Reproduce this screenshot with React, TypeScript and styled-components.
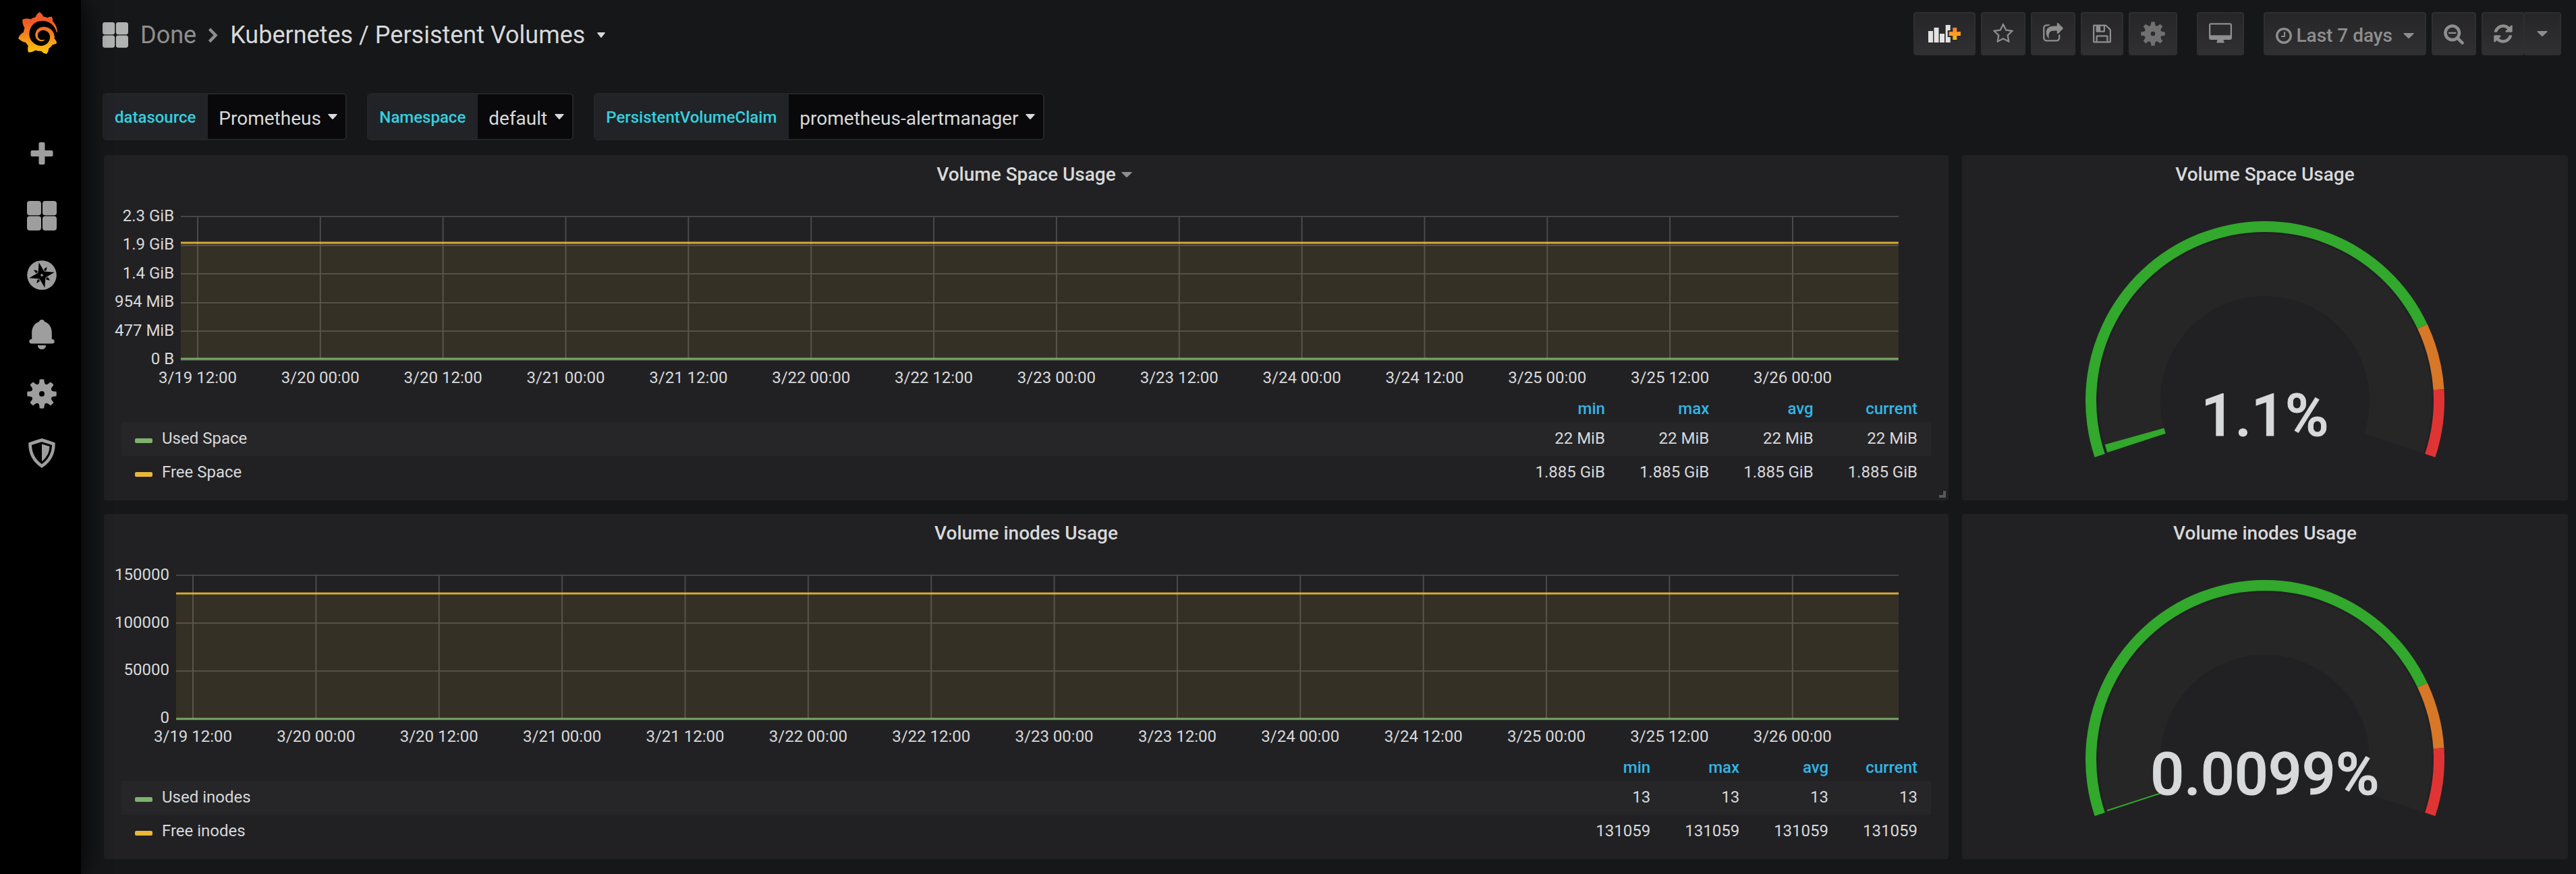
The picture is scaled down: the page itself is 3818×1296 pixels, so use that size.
import React from "react";
import styled, { createGlobalStyle, css } from "styled-components";
import { SiGrafana } from "react-icons/si";

const GlobalStyle = createGlobalStyle`
  *, *::before, *::after { box-sizing: border-box; }
  body {
    margin: 0;
    background: #161719;
    color: #d8d9da;
    font-family: Roboto, "Liberation Sans", sans-serif;
    font-size: 28px;
  }
  button, select { font-family: inherit; }
  a { color: inherit; text-decoration: none; }
`;

/* ---------- layout ---------- */

const Page = styled.div`
  display: flex;
  min-height: 100vh;
`;

const SideMenu = styled.nav`
  z-index: 1;
  flex: none;
  display: flex;
  flex-direction: column;
  width: 120px;
  padding-top: 18px;
  background: #000;
  box-shadow: 0 0 40px #000;
`;

const LogoLink = styled.a`
  display: flex;
  width: 58px;
  height: 62px;
  margin: 0 0 108px 27px;

  svg {
    width: 58px;
    height: 62px;
    fill: url(#logoFill);
  }
`;

const GradientStore = styled.svg`
  position: absolute;
  width: 0;
  height: 0;
`;

const SideLink = styled.a`
  display: flex;
  align-items: center;
  justify-content: center;
  height: 88px;
  padding-right: 36px;
  padding-left: 40px;
  color: #9e9e9e;
`;

const Main = styled.main`
  flex: 1;
  min-width: 0;
`;

const TopBar = styled.header`
  display: flex;
  align-items: center;
  justify-content: space-between;
  height: 100px;
  padding: 0 22px 0 32px;
`;

const Breadcrumb = styled.div`
  display: flex;
  align-items: center;
  gap: 16px;
  padding-top: 3px;
  font-size: 36px;
  line-height: 40px;
`;

const Folder = styled.a`
  padding-left: 2px;
  color: #8e8e8e;
`;

const DashboardTitle = styled.button`
  display: flex;
  align-items: center;
  gap: 18px;
  padding: 0;
  border: 0;
  background: none;
  color: #d8d9da;
  font-size: 36px;
  line-height: 40px;
`;

const Toolbar = styled.div`
  display: flex;
  gap: 29px;
`;

const ButtonGroup = styled.div<{ $joined?: boolean }>`
  display: flex;
  gap: ${(p) => (p.$joined ? 0 : 8)}px;

  ${(p) =>
    p.$joined &&
    css`
      button + button {
        border-left-width: 0;
        border-radius: 0 4px 4px 0;
      }
    `}
`;

const ToolButton = styled.button<{ $pad?: number }>`
  display: flex;
  align-items: center;
  justify-content: center;
  gap: 6px;
  height: 64px;
  padding: 0 ${(p) => p.$pad ?? 16}px;
  border: 2px solid #2f2f32;
  border-radius: 4px;
  background: linear-gradient(180deg, #262628, #303032);
  color: #8e8e8e;
  font-size: 28px;
  font-weight: 500;
`;

const TimeButton = styled(ToolButton)`
  padding-top: 5px;
`;

const TimeText = styled.span`
  padding-right: 10px;
  line-height: 32px;
`;

const Variables = styled.div`
  display: flex;
  flex-wrap: wrap;
  gap: 30px;
  padding: 38px 32px 22px;
`;

const Variable = styled.div`
  display: flex;
  height: 70px;
  border: 2px solid #262628;
  border-radius: 6px;
  overflow: hidden;
`;

const VariableLabel = styled.label`
  display: flex;
  align-items: center;
  padding: 2px 18px 0 16px;
  background: #212327;
  color: #33d1e0;
  font-size: 24px;
  font-weight: 500;
`;

const VariableValue = styled.div`
  display: flex;
  align-items: center;
  gap: 10px;
  padding: 0 12px 0 16px;
  background: #09090b;
`;

const VariableSelect = styled.select`
  appearance: none;
  height: 66px;
  padding: 5px 0 0;
  border: 0;
  background: transparent;
  color: #d8d9da;
  font-size: 28px;
`;

const DashboardGrid = styled.div`
  display: grid;
  grid-template-columns: repeat(24, minmax(0, 1fr));
  gap: 20px;
  padding: 0 12px 22px 34px;
`;

/* ---------- panels ---------- */

const PanelBox = styled.section<{ $span: number }>`
  position: relative;
  display: flex;
  flex-direction: column;
  grid-column: span ${(p) => p.$span};
  padding-bottom: 16px;
  border-radius: 4px;
  background: #212124;
`;

const PanelHeader = styled.header`
  display: grid;
  grid-template-columns: 1fr auto 1fr;
  align-items: center;
  column-gap: 8px;
  height: 56px;
  padding-top: 2px;
  color: #8e8e8e;
`;

const PanelTitle = styled.h2`
  grid-column: 2;
  margin: 0;
  color: #d8d9da;
  font-size: 28px;
  font-weight: 500;
  line-height: 40px;
`;

const ResizeCorner = styled.span`
  position: absolute;
  right: 4px;
  bottom: 4px;
  width: 10px;
  height: 10px;
  border-right: 4px solid #5a5a5c;
  border-bottom: 4px solid #5a5a5c;
`;

const Chart = styled.div`
  display: flex;
  gap: 10px;
  padding: 34px 74px 0 16px;
`;

const YAxis = styled.div`
  display: flex;
  flex-direction: column;
  justify-content: space-between;
  height: 236px;
  margin-top: -12px;
  font-size: 24px;
  line-height: 24px;
  text-align: right;
  white-space: nowrap;
`;

const Plot = styled.svg`
  flex: 1;
  min-width: 0;
  height: 252px;
  overflow: visible;
`;

const TickText = styled.text`
  fill: #d8d9da;
  font-size: 24px;
  text-anchor: middle;
`;

const Legend = styled.table`
  width: calc(100% - 52px);
  margin: 14px 26px 0;
  border-collapse: collapse;
  font-size: 24px;
`;

const LegendHead = styled.th`
  padding: 0 20px 0 31px;
  color: #33b5e5;
  font-weight: 500;
  line-height: 40px;
  text-align: right;
`;

const LegendRow = styled.tr`
  line-height: 48px;

  &:nth-child(odd) {
    background: #262628;
  }
`;

const LegendCell = styled.td`
  padding: 0 20px 2px 31px;
  text-align: right;
  white-space: nowrap;
`;

const LegendName = styled.th`
  width: 100%;
  padding: 0 20px 2px;
  font-weight: 400;
  text-align: left;
`;

const LegendLabel = styled.span`
  display: flex;
  align-items: center;
  gap: 14px;
`;

const Swatch = styled.span<{ $color: string }>`
  width: 26px;
  height: 7px;
  margin-top: 7px;
  border-radius: 2px;
  background: ${(p) => p.$color};
`;

const GaugeDrawing = styled.svg`
  align-self: center;
  width: 600px;
  max-width: 100%;
  height: 400px;
`;

const GaugeValue = styled.text`
  fill: #d8d9da;
  stroke: #d8d9da;
  stroke-width: 1px;
  font-size: 88px;
  font-weight: 500;
  text-anchor: middle;
`;

/* ---------- icons ---------- */

const FA = {
  star: "M1201 1004l306-297-422-62-189-382-189 382-422 62 306 297-73 421 378-199 377 199zm527-357q0 22-26 48l-363 354 86 500q1 7 1 20 0 50-41 50-19 0-40-12l-449-236-449 236q-22 12-40 12-21 0-31.5-14.5t-10.5-35.5q0-6 2-20l86-500-364-354q-25-27-25-48 0-37 56-46l502-73 225-455q19-41 49-41t49 41l225 455 502 73q56 9 56 46z",
  share:
    "M1472 989v259q0 119-84.5 203.5t-203.5 84.5h-832q-119 0-203.5-84.5t-84.5-203.5v-832q0-119 84.5-203.5t203.5-84.5h255q13 0 22.5 9.5t9.5 22.5q0 27-26 32-77 26-133 60-10 4-16 4h-112q-66 0-113 47t-47 113v832q0 66 47 113t113 47h832q66 0 113-47t47-113v-214q0-19 18-29 28-13 54-37 16-16 35-8 21 9 21 29zm237-496l-384 384q-18 19-45 19-12 0-25-5-39-17-39-59v-192h-160q-323 0-438 131-119 137-74 473 3 23-20 34-8 2-12 2-16 0-26-13-10-14-21-31t-39.5-68.5-49.5-99.5-38.5-114-17.5-122q0-49 3.5-91t14-90 28-88 47-81.5 68.5-74 94.5-61.5 124.5-48.5 159.5-30.5 196.5-11h160v-192q0-42 39-59 13-5 25-5 26 0 45 19l384 384q19 19 19 45t-19 45z",
  save: "M512 1536h768v-384h-768v384zm896 0h128v-896q0-14-10-38.5t-20-34.5l-281-281q-10-10-34-20t-39-10v416q0 40-28 68t-68 28h-576q-40 0-68-28t-28-68v-416h-128v1280h128v-416q0-40 28-68t68-28h832q40 0 68 28t28 68v416zm-384-928v-320q0-13-9.5-22.5t-22.5-9.5h-192q-13 0-22.5 9.5t-9.5 22.5v320q0 13 9.5 22.5t22.5 9.5h192q13 0 22.5-9.5t9.5-22.5zm640 32v928q0 40-28 68t-68 28h-1344q-40 0-68-28t-28-68v-1344q0-40 28-68t68-28h928q40 0 88 20t76 48l280 280q28 28 48 76t20 88z",
  desktop:
    "M1728 992v-832q0-13-9.5-22.5t-22.5-9.5h-1600q-13 0-22.5 9.5t-9.5 22.5v832q0 13 9.5 22.5t22.5 9.5h1600q13 0 22.5-9.5t9.5-22.5zm128-832v1088q0 66-47 113t-113 47h-544q0 37 16 77.5t32 71 16 43.5q0 26-19 45t-45 19h-512q-26 0-45-19t-19-45q0-14 16-44t32-70 16-78h-544q-66 0-113-47t-47-113v-1088q0-66 47-113t113-47h1600q66 0 113 47t47 113z",
  clock:
    "M1024 544v448q0 14-9 23t-23 9h-320q-14 0-23-9t-9-23v-64q0-14 9-23t23-9h224v-352q0-14 9-23t23-9h64q14 0 23 9t9 23zm416 352q0-148-73-273t-198-198-273-73-273 73-198 198-73 273 73 273 198 198 273 73 273-73 198-198 73-273zm224 0q0 209-103 385.5t-279.5 279.5-385.5 103-385.5-103-279.5-279.5-103-385.5 103-385.5 279.5-279.5 385.5-103 385.5 103 279.5 279.5 103 385.5z",
  zoomOut:
    "M1088 800v64q0 13-9.5 22.5t-22.5 9.5h-576q-13 0-22.5-9.5t-9.5-22.5v-64q0-13 9.5-22.5t22.5-9.5h576q13 0 22.5 9.5t9.5 22.5zm128 32q0-185-131.5-316.5t-316.5-131.5-316.5 131.5-131.5 316.5 131.5 316.5 316.5 131.5 316.5-131.5 131.5-316.5zm512 832q0 53-37.5 90.5t-90.5 37.5q-54 0-90-38l-343-342q-179 124-399 124-143 0-273.5-55.5t-225-150-150-225-55.5-273.5 55.5-273.5 150-225 225-150 273.5-55.5 273.5 55.5 225 150 150 225 55.5 273.5q0 220-124 399l343 343q37 37 37 90z",
  refresh:
    "M1639 1056q0 5-1 7-64 268-268 434.5t-478 166.5q-146 0-282.5-55t-243.5-157l-129 129q-19 19-45 19t-45-19-19-45v-448q0-26 19-45t45-19h448q26 0 45 19t19 45-19 45l-137 137q71 66 161 102t187 36q134 0 250-65t186-179q11-17 53-117 8-23 30-23h192q13 0 22.5 9.5t9.5 22.5zm25-800v448q0 26-19 45t-45 19h-448q-26 0-45-19t-19-45 19-45l138-138q-148-137-349-137-134 0-250 65t-186 179q-11 17-53 117-8 23-30 23h-199q-13 0-22.5-9.5t-9.5-22.5v-7q65-268 270-434.5t480-166.5q146 0 284 55.5t245 156.5l130-129q19-19 45-19t45 19 19 45z",
};

function FaIcon({ d, x, w, size = 32 }: { d: string; x: number; w: number; size?: number }) {
  return (
    <svg
      width={Math.round((w * size) / 1792)}
      height={size}
      viewBox={`${x} 0 ${w} 1792`}
      fill="currentColor"
      aria-hidden="true"
    >
      <path d={d} />
    </svg>
  );
}

function Caret({ width = 14 }: { width?: number }) {
  return (
    <svg width={width} height={8} viewBox="0 0 16 9" preserveAspectRatio="none" fill="currentColor" aria-hidden="true">
      <path d="M1 0h14q1 0 .6 1L9 8.5q-1 1-2 0L.4 1Q0 0 1 0z" />
    </svg>
  );
}

function AppsIcon({ size, color }: { size: number; color?: string }) {
  return (
    <svg width={size} height={size} viewBox="0 0 44 44" fill={color ?? "currentColor"} aria-hidden="true">
      <rect x="0" y="0" width="21" height="21.2" rx="4" />
      <rect x="23" y="0" width="21" height="21.2" rx="4" />
      <rect x="0" y="22.5" width="21" height="21.2" rx="4" />
      <rect x="23" y="22.5" width="21" height="21.2" rx="4" />
    </svg>
  );
}

/* Eight flared teeth round a disc, with a hole punched in the middle. */
const gearPath = (() => {
  const at = (deg: number, r: number) => {
    const a = (deg * Math.PI) / 180;
    return `${(22 + r * Math.sin(a)).toFixed(2)} ${(22 - r * Math.cos(a)).toFixed(2)}`;
  };
  const parts: string[] = [];
  for (let i = 0; i < 8; i++) {
    const c = i * 45;
    parts.push(
      `${i === 0 ? "M" : "L"}${at(c - 19, 15.4)}`,
      `Q${at(c - 12, 16.4)} ${at(c - 9, 21.6)}`,
      `Q${at(c, 22.3)} ${at(c + 9, 21.6)}`,
      `Q${at(c + 12, 16.4)} ${at(c + 19, 15.4)}`,
    );
  }
  return `${parts.join("")}ZM22 18a4 4 0 1 0 0 8 4 4 0 1 0 0-8z`;
})();

function GearIcon({ size }: { size: number }) {
  return (
    <svg width={size} height={size} viewBox="0 0 44 44" fill="currentColor" fillRule="evenodd" aria-hidden="true">
      <path d={gearPath} />
    </svg>
  );
}

function PlusIcon() {
  return (
    <svg width={44} height={44} viewBox="0 0 44 44" fill="currentColor" aria-hidden="true">
      <rect x="5.5" y="13" width="33" height="9" rx="2" />
      <rect x="17.5" y="1" width="9" height="33" rx="2" />
    </svg>
  );
}

function CompassIcon() {
  return (
    <svg width={44} height={44} viewBox="-22 -22 44 44" aria-hidden="true">
      <circle r="21.8" fill="currentColor" />
      <g fill="#000" transform="rotate(-13)">
        <path d="M0-19.2L4.600-4.600 19.200 0 4.600 4.600 0 19.200-4.600 4.600-19.200 0-4.600-4.600z" />
        {[45, 135, 225, 315].map((a) => (
          <path key={a} d="M0-14.400L2-9.400 0-7.200-2-9.400z" transform={`rotate(${a})`} />
        ))}
      </g>
      <circle r="1.8" fill="currentColor" />
    </svg>
  );
}

function BellIcon() {
  return (
    <svg width={44} height={44} viewBox="0 0.5 44 42.5" preserveAspectRatio="none" fill="currentColor" aria-hidden="true">
      <path d="M22 .5c2 0 3.600 1.200 4 3 6.600 2 10.800 8.200 10.800 15.500v9.500h.7a3.100 3.100 0 0 1 0 6.200h-31a3.100 3.100 0 0 1 0-6.200h.7V19C7.200 11.700 11.400 5.500 18 3.500c.4-1.800 2-3 4-3z" />
      <path d="M15.800 37.200h12.400q-.8 5.800-6.200 5.800t-6.200-5.800z" />
    </svg>
  );
}

function ShieldIcon() {
  return (
    <svg width={44} height={44} viewBox="0 0.5 44 42.5" preserveAspectRatio="none" aria-hidden="true">
      <path
        d="M22 3Q13 5.500 4.600 8.500 4.600 29 22 40.200 39.400 29 39.400 8.500 31 5.500 22 3z"
        fill="none"
        stroke="currentColor"
        strokeWidth="4.600"
      />
      <path d="M22 8.800l11.500 3.400Q33 25.500 22 33.500z" fill="currentColor" />
    </svg>
  );
}

function AddPanelIcon() {
  return (
    <svg width={48} height={26} viewBox="0 0 48 26" aria-hidden="true">
      <defs>
        <linearGradient id="addPlus" x1="0" y1="0" x2="0" y2="1">
          <stop offset="0" stopColor="#f07f3c" />
          <stop offset="1" stopColor="#fdbb11" />
        </linearGradient>
      </defs>
      <g fill="#e3e3e3">
        <rect x="0" y="9" width="7" height="17" />
        <rect x="8.500" y="4" width="7" height="22" />
        <rect x="17" y="13" width="7" height="13" />
        <rect x="25.700" y="0" width="7" height="26" />
      </g>
      <path
        d="M36.300 4h6v6H48v6h-5.700v6h-6v-6h-5.600v-6h5.600z"
        fill="url(#addPlus)"
        stroke="#2a2a2c"
        strokeWidth="4"
        paintOrder="stroke"
      />
    </svg>
  );
}

function ChevronIcon() {
  return (
    <svg width={18} height={24} viewBox="0 0 18 24" fill="none" stroke="#8e8e8e" strokeWidth="4.500" aria-hidden="true">
      <path d="M3.500 3l9 9.300-9 9.300" />
    </svg>
  );
}

/* ---------- graph panel ---------- */

const GREEN = "#7eb26d";
const YELLOW = "#eab839";

const TIMES = [
  "3/19 12:00", "3/20 00:00", "3/20 12:00", "3/21 00:00", "3/21 12:00", "3/22 00:00", "3/22 12:00",
  "3/23 00:00", "3/23 12:00", "3/24 00:00", "3/24 12:00", "3/25 00:00", "3/25 12:00", "3/26 00:00",
];

interface Series {
  name: string;
  color: string;
  /* share of the y axis that the stacked line reaches */
  level: number;
  stats: string[];
}

function GraphPanel({
  title,
  yLabels,
  series,
  active,
}: {
  title: string;
  yLabels: string[];
  series: Series[];
  active?: boolean;
}) {
  const bottom = 214;
  const steps = yLabels.length - 1;
  const y = (level: number) => Math.round(bottom - level * (bottom - 1));
  const used = series[0];
  const free = series[1];

  return (
    <PanelBox $span={18}>
      <PanelHeader>
        <PanelTitle>{title}</PanelTitle>
        {active && <Caret width={16} />}
      </PanelHeader>
      <Chart>
        <YAxis>
          {yLabels.map((label) => (
            <span key={label}>{label}</span>
          ))}
        </YAxis>
        <Plot role="img" aria-label={title}>
          {yLabels.map((label, i) => (
            <line key={label} x1="0" x2="100%" y1={y(i / steps)} y2={y(i / steps)} stroke="#464648" strokeWidth="2" />
          ))}
          {TIMES.map((time, i) => {
            const x = `${0.98 + i * 7.143}%`;
            return (
              <g key={time}>
                <line x1={x} x2={x} y1="0" y2={bottom} stroke="#4a4a4c" strokeWidth="2" />
                <TickText x={x} y="248">
                  {time}
                </TickText>
              </g>
            );
          })}
          <rect x="0" y={y(free.level)} width="100%" height={bottom - y(free.level)} fill={free.color} opacity="0.1" />
          {[free, used].map((s) => (
            <line key={s.name} x1="0" x2="100%" y1={y(s.level)} y2={y(s.level)} stroke={s.color} strokeWidth="3" strokeOpacity="0.9" />
          ))}
        </Plot>
      </Chart>
      <Legend>
        <thead>
          <tr>
            <td />
            {["min", "max", "avg", "current"].map((h) => (
              <LegendHead key={h} scope="col">
                {h}
              </LegendHead>
            ))}
          </tr>
        </thead>
        <tbody>
          {series.map((s) => (
            <LegendRow key={s.name}>
              <LegendName scope="row">
                <LegendLabel>
                  <Swatch $color={s.color} />
                  {s.name}
                </LegendLabel>
              </LegendName>
              {s.stats.map((v, i) => (
                <LegendCell key={i}>{v}</LegendCell>
              ))}
            </LegendRow>
          ))}
        </tbody>
      </Legend>
      {active && <ResizeCorner />}
    </PanelBox>
  );
}

/* ---------- gauge panel ---------- */

/* The dial sweeps 216 degrees, starting 18 degrees below the left horizon. */
function arc(from: number, to: number, outer: number, inner: number) {
  const point = (share: number, r: number) => {
    const a = ((198 - share * 216) * Math.PI) / 180;
    return `${(r * Math.cos(a)).toFixed(2)} ${(-r * Math.sin(a)).toFixed(2)}`;
  };
  const large = to - from > 180 / 216 ? 1 : 0;
  return (
    `M${point(from, outer)}A${outer} ${outer} 0 ${large} 1 ${point(to, outer)}` +
    `L${point(to, inner)}A${inner} ${inner} 0 ${large} 0 ${point(from, inner)}Z`
  );
}

function GaugePanel({ title, value, text }: { title: string; value: number; text: string }) {
  return (
    <PanelBox $span={6}>
      <PanelHeader>
        <PanelTitle>{title}</PanelTitle>
      </PanelHeader>
      <GaugeDrawing viewBox="-300 -308 600 400" role="img" aria-label={`${title} ${text}`}>
        <path d={arc(-0.002, 1.002, 247, 155)} fill="#262626" />
        <path d={arc(0, value, 245, 156)} fill="#32a82c" stroke="#32a82c" strokeWidth="2" />
        <path d={arc(-0.002, 0.8, 266, 250)} fill="#32a82c" />
        <path d={arc(0.8, 0.9, 266, 250)} fill="#d77728" />
        <path d={arc(0.9, 1.002, 266, 250)} fill="#e03434" />
        <GaugeValue x="0" y="52">
          {text}
        </GaugeValue>
      </GaugeDrawing>
    </PanelBox>
  );
}

/* ---------- page ---------- */

const VARIABLES = [
  { name: "datasource", value: "Prometheus" },
  { name: "Namespace", value: "default" },
  { name: "PersistentVolumeClaim", value: "prometheus-alertmanager" },
];

const SIDE_ITEMS = [
  { label: "Create", icon: <PlusIcon /> },
  { label: "Dashboards", icon: <AppsIcon size={44} /> },
  { label: "Explore", icon: <CompassIcon /> },
  { label: "Alerting", icon: <BellIcon /> },
  { label: "Configuration", icon: <GearIcon size={44} /> },
  { label: "Server Admin", icon: <ShieldIcon /> },
];

const SPACE: Series[] = [
  { name: "Used Space", color: GREEN, level: 0.009, stats: ["22 MiB", "22 MiB", "22 MiB", "22 MiB"] },
  { name: "Free Space", color: YELLOW, level: 0.819, stats: ["1.885 GiB", "1.885 GiB", "1.885 GiB", "1.885 GiB"] },
];

const INODES: Series[] = [
  { name: "Used inodes", color: GREEN, level: 0, stats: ["13", "13", "13", "13"] },
  { name: "Free inodes", color: YELLOW, level: 0.874, stats: ["131059", "131059", "131059", "131059"] },
];

const MutedGear = styled.span`
  display: flex;
  color: #707070;
`;

export default function App() {
  return (
    <>
      <GlobalStyle />
      <GradientStore aria-hidden="true">
        <defs>
          <linearGradient id="logoFill" x1="0" y1="0" x2="0" y2="1">
            <stop offset="0.25" stopColor="#f05a28" />
            <stop offset="1" stopColor="#fbca0a" />
          </linearGradient>
        </defs>
      </GradientStore>
      <Page>
        <SideMenu aria-label="Main menu">
          <LogoLink href="#home" aria-label="Home">
            <SiGrafana viewBox="0.9 0 22.2 24" preserveAspectRatio="none" />
          </LogoLink>
          {SIDE_ITEMS.map((item) => (
            <SideLink key={item.label} href="#menu" aria-label={item.label}>
              {item.icon}
            </SideLink>
          ))}
        </SideMenu>
        <Main>
          <TopBar>
            <Breadcrumb>
              <AppsIcon size={38} color="#b0b1b1" />
              <Folder href="#folder">Done</Folder>
              <ChevronIcon />
              <DashboardTitle>
                Kubernetes / Persistent Volumes
                <Caret width={12} />
              </DashboardTitle>
            </Breadcrumb>
            <Toolbar>
              <ButtonGroup>
                <ToolButton $pad={20} aria-label="Add panel">
                  <AddPanelIcon />
                </ToolButton>
                <ToolButton aria-label="Mark as favorite">
                  <FaIcon d={FA.star} x={64} w={1664} />
                </ToolButton>
                <ToolButton aria-label="Share dashboard">
                  <FaIcon d={FA.share} x={64} w={1664} />
                </ToolButton>
                <ToolButton aria-label="Save dashboard">
                  <FaIcon d={FA.save} x={128} w={1536} />
                </ToolButton>
                <ToolButton aria-label="Dashboard settings">
                  <MutedGear>
                    <GearIcon size={36} />
                  </MutedGear>
                </ToolButton>
              </ButtonGroup>
              <ButtonGroup>
                <ToolButton aria-label="Cycle view mode">
                  <FaIcon d={FA.desktop} x={-64} w={1920} />
                </ToolButton>
              </ButtonGroup>
              <ButtonGroup>
                <TimeButton>
                  <FaIcon d={FA.clock} x={128} w={1536} size={28} />
                  <TimeText>Last 7 days</TimeText>
                  <Caret width={16} />
                </TimeButton>
                <ToolButton aria-label="Zoom out time range">
                  <FaIcon d={FA.zoomOut} x={64} w={1664} />
                </ToolButton>
                <ButtonGroup $joined>
                  <ToolButton aria-label="Refresh dashboard">
                    <FaIcon d={FA.refresh} x={112} w={1568} />
                  </ToolButton>
                  <ToolButton $pad={18} aria-label="Refresh interval">
                    <Caret width={16} />
                  </ToolButton>
                </ButtonGroup>
              </ButtonGroup>
            </Toolbar>
          </TopBar>
          <Variables>
            {VARIABLES.map((v) => (
              <Variable key={v.name}>
                <VariableLabel htmlFor={v.name}>{v.name}</VariableLabel>
                <VariableValue>
                  <VariableSelect id={v.name} defaultValue={v.value}>
                    <option>{v.value}</option>
                  </VariableSelect>
                  <Caret />
                </VariableValue>
              </Variable>
            ))}
          </Variables>
          <DashboardGrid>
            <GraphPanel
              active
              title="Volume Space Usage"
              yLabels={["2.3 GiB", "1.9 GiB", "1.4 GiB", "954 MiB", "477 MiB", "0 B"]}
              series={SPACE}
            />
            <GaugePanel title="Volume Space Usage" value={0.011} text="1.1%" />
            <GraphPanel title="Volume inodes Usage" yLabels={["150000", "100000", "50000", "0"]} series={INODES} />
            <GaugePanel title="Volume inodes Usage" value={0.0001} text="0.0099%" />
          </DashboardGrid>
        </Main>
      </Page>
    </>
  );
}
